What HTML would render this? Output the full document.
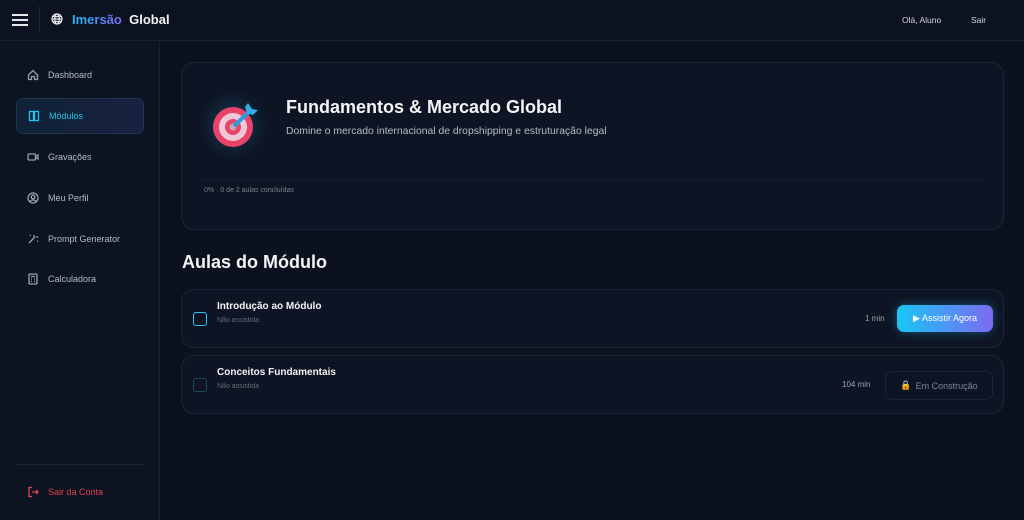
<!DOCTYPE html>
<html><head><meta charset="utf-8"><style>
*{box-sizing:border-box;margin:0;padding:0}
body{width:1024px;height:520px;overflow:hidden;background:#0b111e;font-family:"Liberation Sans",sans-serif;color:#e5e7eb;position:relative}
.top{position:absolute;left:0;top:0;width:1024px;height:41px;border-bottom:1px solid #1a2232;background:#0c1220}
.side{position:absolute;left:0;top:41px;width:160px;height:479px;border-right:1px solid #1a2232;background:#0d1321}
.nav{position:absolute;left:16px;width:128px;height:36px;display:flex;align-items:center;padding-left:11px;font-size:9px;color:#b4bac6}
.nav svg{width:12px;height:12px;margin-right:9px;stroke:#9aa1ad;fill:none;stroke-width:1.3}
.active{background:linear-gradient(90deg,#0f2236,#1a2140);border:1px solid #1e3550;border-radius:7px;color:#22c5f0}
.active svg{stroke:#22c5f0}
.card{position:absolute;border:1px solid #1d2535;border-radius:13px;background:#0e1423}
.btn{position:absolute;border-radius:7px;font-size:9px;display:flex;align-items:center;justify-content:center}
.hb{position:absolute;left:12px;width:16px;height:1.5px;background:#e5e7eb}
</style></head><body>
<div class="top">
 <div class="hb" style="top:14px"></div><div class="hb" style="top:19px"></div><div class="hb" style="top:24px"></div>
 <div style="position:absolute;left:39px;top:6px;width:1px;height:27px;background:#1d2535"></div>
 <svg style="position:absolute;left:51px;top:13px" width="12" height="12" viewBox="0 0 12 12" fill="none" stroke="#e5e7eb" stroke-width="1.2"><circle cx="6" cy="6" r="5"/><ellipse cx="6" cy="6" rx="2.2" ry="5"/><path d="M1 6h10M2 3.5h8M2 8.5h8"/></svg>
 <div style="position:absolute;left:72px;top:12px;font-size:13px;font-weight:bold"><span style="background:linear-gradient(90deg,#1fb8f5,#7b6cf5);-webkit-background-clip:text;color:transparent">Imersão</span>&nbsp; <span style="color:#f3f4f6">Global</span></div>
 <div style="position:absolute;left:902px;top:15px;font-size:8.5px;color:#d1d5db">Olá, Aluno</div>
 <div style="position:absolute;left:971px;top:15px;font-size:8.5px;color:#d1d5db">Sair</div>
</div>
<div class="side">
 <div class="nav" style="top:16px"><svg viewBox="0 0 12 12"><path d="M1.5 6L6 1.5 10.5 6v4.5h-3v-3h-3v3h-3z"/></svg>Dashboard</div>
 <div class="nav active" style="top:57px"><svg viewBox="0 0 12 12"><rect x="1.5" y="1.5" width="4" height="9"/><rect x="6.5" y="1.5" width="4" height="9"/></svg>Módulos</div>
 <div class="nav" style="top:98px"><svg viewBox="0 0 12 12"><rect x="1" y="3" width="7.5" height="6" rx="1"/><path d="M8.5 5.5l2.5-1.5v4l-2.5-1.5"/></svg>Gravações</div>
 <div class="nav" style="top:139px"><svg viewBox="0 0 12 12"><circle cx="6" cy="6" r="5"/><circle cx="6" cy="5" r="1.8"/><path d="M3 9.5c1.5-2 4.5-2 6 0"/></svg>Meu Perfil</div>
 <div class="nav" style="top:180px"><svg viewBox="0 0 12 12"><path d="M2 10l6-6M7 2v2M9 4h2M3 2l.5 1M10 8l1 .5"/></svg>Prompt Generator</div>
 <div class="nav" style="top:220px"><svg viewBox="0 0 12 12"><rect x="2" y="1" width="8" height="10" rx="1"/><path d="M4 3.5h4M4 6h1M7 6h1M4 8.5h1M7 8.5h1"/></svg>Calculadora</div>
 <div style="position:absolute;left:16px;top:423px;width:128px;height:1px;background:#1d2535"></div>
 <div class="nav" style="top:433px;color:#e0434f"><svg viewBox="0 0 12 12" style="stroke:#e0434f"><path d="M5 1.5H2v9h3M5 6h6M9 4l2 2-2 2"/></svg>Sair da Conta</div>
</div>
<div class="card" style="left:181px;top:62px;width:823px;height:168px">
 <div style="position:absolute;left:34px;top:45px;width:34px;height:34px;border-radius:50%;box-shadow:0 0 20px 4px rgba(30,170,220,.3)"></div>
 <svg style="position:absolute;left:30px;top:36px" width="52" height="52" viewBox="0 0 52 52"><circle cx="21" cy="28" r="20" fill="#e8446a"/><circle cx="21" cy="28" r="14" fill="#f0c8d8"/><circle cx="21" cy="28" r="8" fill="#e8446a"/><circle cx="21" cy="28" r="3.5" fill="#c9a6b8"/><path d="M22 27L40 10" stroke="#2a9fe0" stroke-width="4"/><path d="M36 4l4 6 6 1-5 5-6-2-2-6z" fill="#3aa8e8"/></svg>
 <div style="position:absolute;left:104px;top:34px;font-size:18px;font-weight:bold;color:#f3f4f6">Fundamentos &amp; Mercado Global</div>
 <div style="position:absolute;left:104px;top:63px;font-size:10.4px;color:#b4bac6">Domine o mercado internacional de dropshipping e estruturação legal</div>
 <div style="position:absolute;left:20px;top:117px;width:782px;height:1px;background:#161e2c"></div>
 <div style="position:absolute;left:22px;top:124px;font-size:7px;color:#7a818e">0% · 0 de 2 aulas concluídas</div>
</div>
<div style="position:absolute;left:182px;top:252px;font-size:18px;font-weight:bold;color:#f3f4f6">Aulas do Módulo</div>
<div class="card" style="left:181px;top:289px;width:823px;height:59px">
 <div style="position:absolute;left:11px;top:22px;width:14px;height:14px;border:1.5px solid #22c5f0;border-radius:3px"></div>
 <div style="position:absolute;left:35px;top:11px;font-size:10px;font-weight:bold;color:#f3f4f6">Introdução ao Módulo</div>
 <div style="position:absolute;left:35px;top:27px;font-size:7px;color:#646b78">Não assistida</div>
 <div style="position:absolute;left:683px;top:24px;font-size:8px;color:#9aa1ad">1 min</div>
 <div class="btn" style="left:715px;top:15px;width:96px;height:27px;background:linear-gradient(90deg,#18c6f5,#7c6af2);color:#fff;box-shadow:0 0 10px rgba(30,190,240,.4)">▶ Assistir Agora</div>
</div>
<div class="card" style="left:181px;top:355px;width:823px;height:59px">
 <div style="position:absolute;left:11px;top:22px;width:14px;height:14px;border:1.5px solid #164a5e;border-radius:3px"></div>
 <div style="position:absolute;left:35px;top:11px;font-size:10px;font-weight:bold;color:#f3f4f6">Conceitos Fundamentais</div>
 <div style="position:absolute;left:35px;top:27px;font-size:7px;color:#646b78">Não assistida</div>
 <div style="position:absolute;left:660px;top:24px;font-size:8px;color:#9aa1ad">104 min</div>
 <div class="btn" style="left:703px;top:15px;width:108px;height:29px;border:1px solid #1d2535;color:#7d8492"><span style="color:#b58030;margin-right:4px">🔒</span>Em Construção</div>
</div>
</body></html>
